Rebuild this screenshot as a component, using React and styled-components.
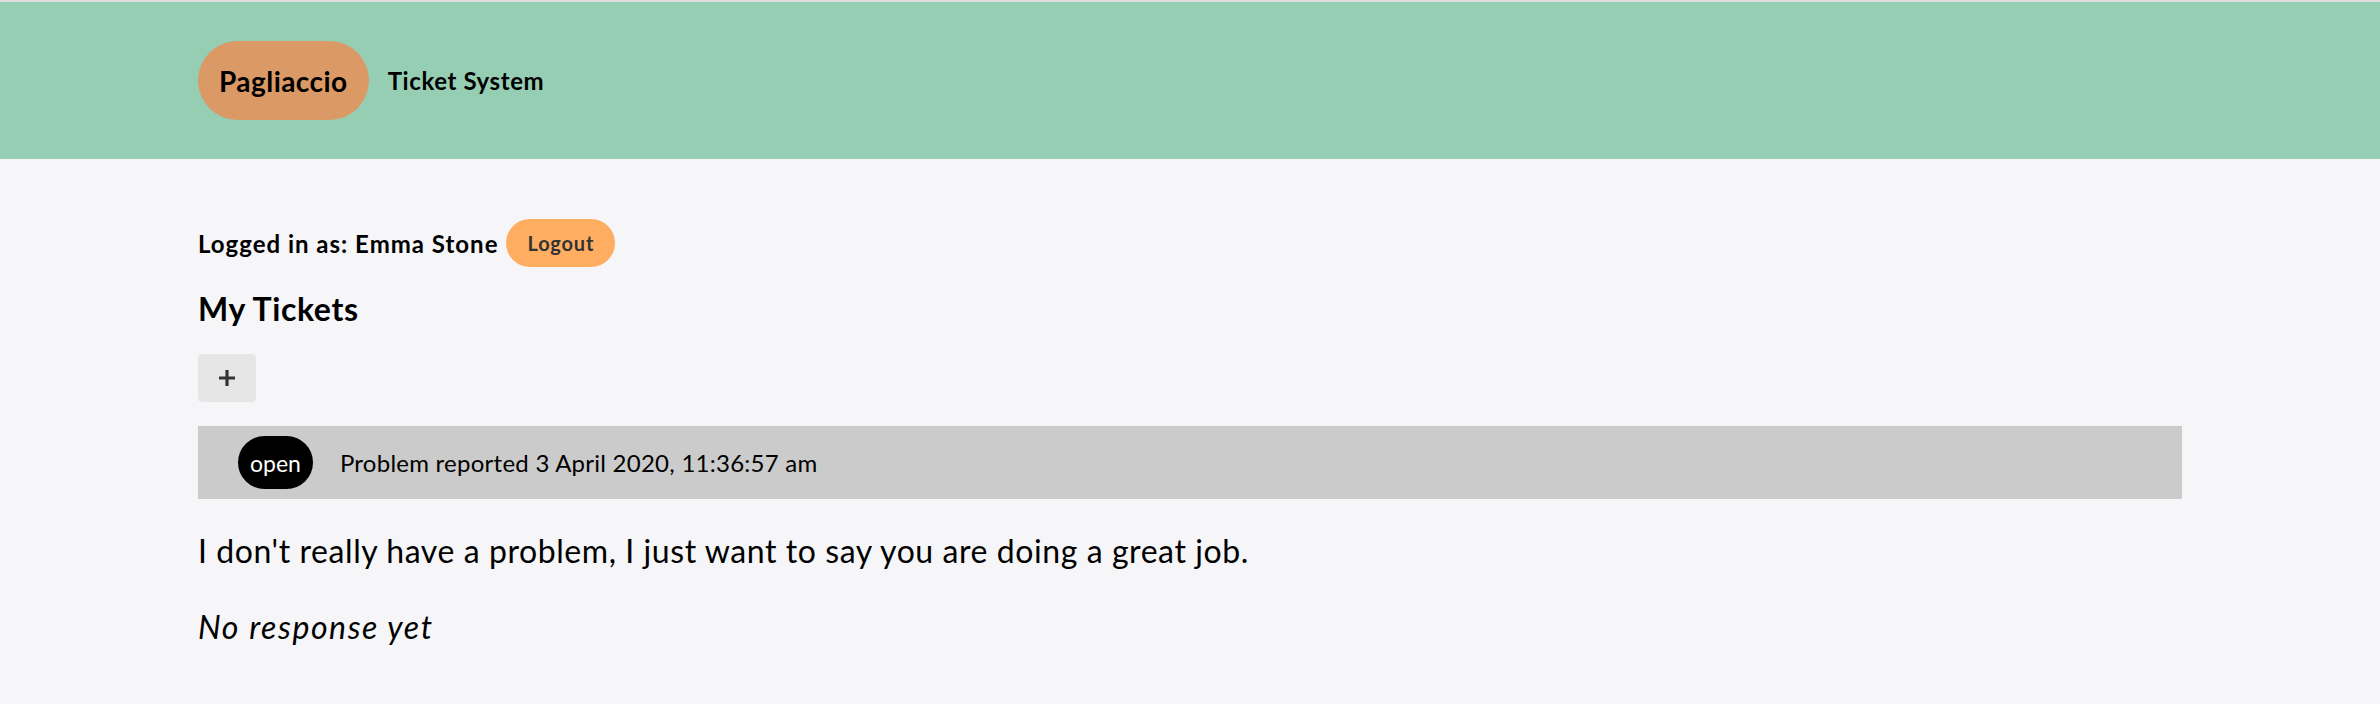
import React from 'react';
import styled, { createGlobalStyle } from 'styled-components';

const GlobalStyle = createGlobalStyle`
  body {
    margin: 0;
    background: #f6f5f8;
    font-family: Lato, 'Open Sans', sans-serif;
    color: #000;
  }
`;

const Header = styled.header`
  display: flex;
  align-items: center;
  gap: 19px;
  padding: 39px 198px;
  background: #96ceb4;
  border-top: 2px solid #dedede;
`;

const Brand = styled.div`
  display: flex;
  align-items: center;
  height: 79px;
  padding: 0 21px;
  background: #db9a65;
  border-radius: 40px;
  font-size: 28px;
  font-weight: 700;
  letter-spacing: 0.45px;
`;

const Subtitle = styled.span`
  font-size: 24px;
  font-weight: 700;
  letter-spacing: 0.6px;
`;

const Main = styled.main`
  padding: 60px 198px 0;
`;

const UserBar = styled.div`
  display: flex;
  align-items: center;
  gap: 8px;
  font-size: 24px;
  font-weight: 700;
  letter-spacing: 1px;
`;

const LogoutButton = styled.button`
  height: 48px;
  padding: 0 21px;
  border: none;
  border-radius: 24px;
  background: #ffad60;
  color: #333;
  font-family: inherit;
  font-size: 20px;
  font-weight: 700;
  letter-spacing: 0.8px;
  cursor: pointer;
`;

const Title = styled.h2`
  margin: 22px 0 0;
  font-size: 32px;
  line-height: 40px;
  font-weight: 700;
  letter-spacing: 0.6px;
`;

const AddButton = styled.button`
  display: flex;
  align-items: center;
  justify-content: center;
  margin-top: 25px;
  width: 58px;
  height: 48px;
  padding: 0;
  border: none;
  border-radius: 4px;
  background: #e6e6e6;
  cursor: pointer;
`;

const TicketBar = styled.div`
  display: flex;
  align-items: center;
  gap: 27px;
  margin-top: 24px;
  padding: 10px 40px;
  background: #cbcbcb;
  font-size: 24px;
  letter-spacing: 0.25px;
`;

const Status = styled.span`
  display: flex;
  align-items: center;
  height: 53px;
  padding: 0 12px;
  border-radius: 27px;
  background: #000;
  color: #fff;
  font-size: 23px;
  letter-spacing: 0;
`;

const Message = styled.p`
  margin: ${(p) => (p.$muted ? '36px' : '32px')} 0 0;
  font-size: 32px;
  line-height: 40px;
  font-style: ${(p) => (p.$muted ? 'italic' : 'normal')};
  letter-spacing: ${(p) => (p.$muted ? '1.6px' : '0.57px')};
`;

const PlusIcon = () => (
  <svg width="18" height="18" viewBox="0 0 18 18">
    <path d="M9 1v16M1 9h16" stroke="#333" strokeWidth="3.2" />
  </svg>
);

const tickets = [
  {
    status: 'open',
    reported: '3 April 2020, 11:36:57 am',
    text: "I don't really have a problem, I just want to say you are doing a great job.",
    response: null,
  },
];

const App = () => (
  <>
    <GlobalStyle />
    <Header>
      <Brand>Pagliaccio</Brand>
      <Subtitle>Ticket System</Subtitle>
    </Header>

    <Main>
      <UserBar>
        Logged in as: Emma Stone
        <LogoutButton>Logout</LogoutButton>
      </UserBar>

      <Title>My Tickets</Title>
      <AddButton aria-label="New ticket">
        <PlusIcon />
      </AddButton>

      {tickets.map((ticket) => (
        <section key={ticket.reported}>
          <TicketBar>
            <Status>{ticket.status}</Status>
            Problem reported {ticket.reported}
          </TicketBar>
          <Message>{ticket.text}</Message>
          <Message $muted>{ticket.response || 'No response yet'}</Message>
        </section>
      ))}
    </Main>
  </>
);

export default App;
